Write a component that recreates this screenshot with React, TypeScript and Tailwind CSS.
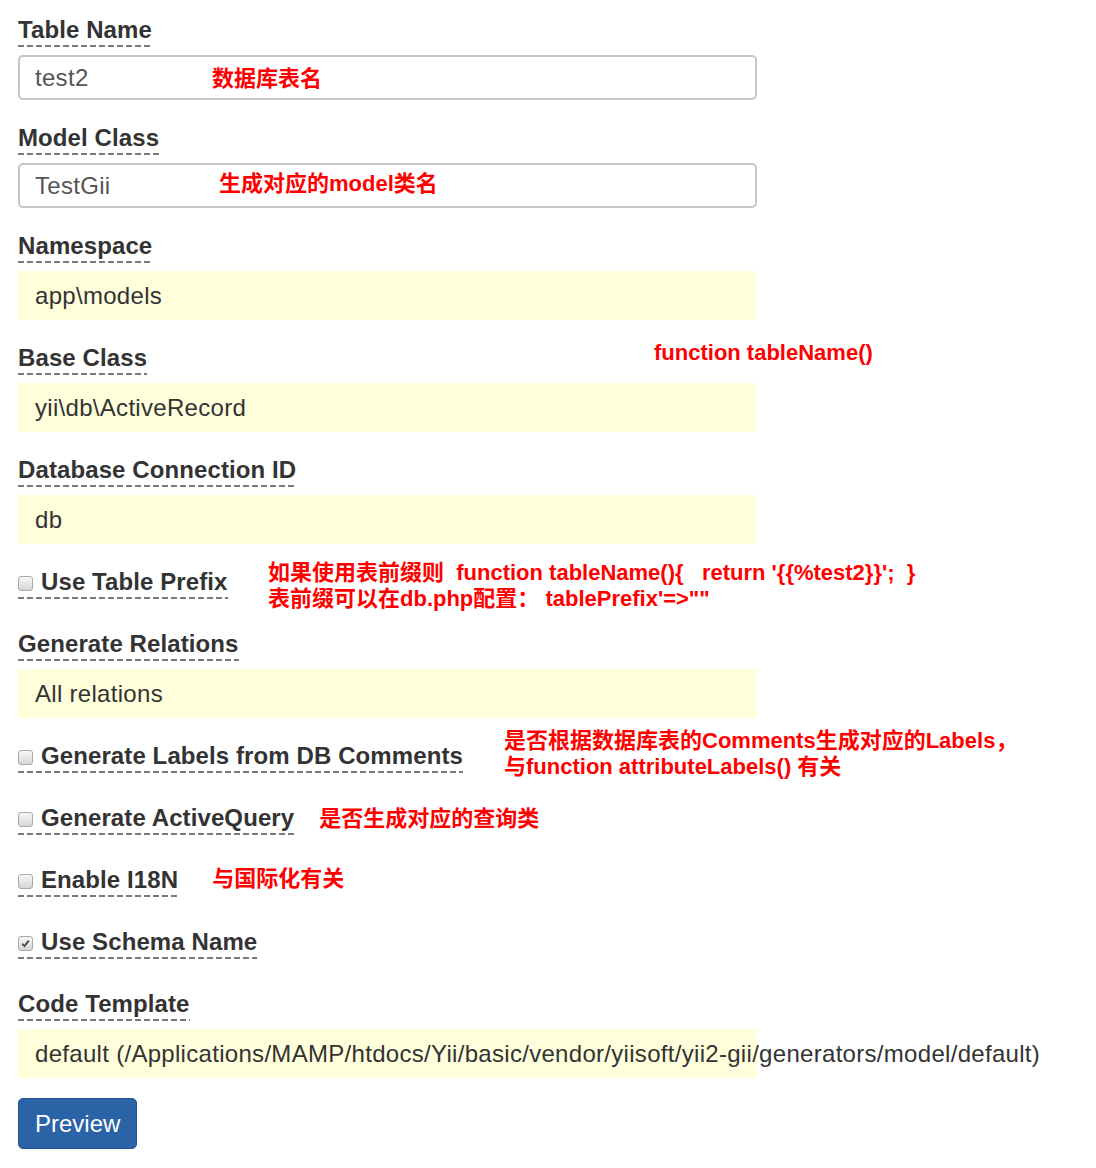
import React from "react";

const font = "font-['Liberation_Sans','Noto_Sans_CJK_SC',sans-serif]";
const dashed =
  "bg-[linear-gradient(to_right,#7a7a7a_6px,transparent_6px)] bg-[length:9px_2px] bg-bottom-left bg-repeat-x";
const red = "whitespace-pre text-[22px] leading-[26px] font-bold text-[#ff0000]";
const note = `absolute ${red}`;

function Label({ text }: { text: string }) {
  return (
    <div>
      <span className={`inline-block text-[24px] leading-[28px] font-bold tracking-[0.1px] text-[#333] pb-[3px] ${dashed}`}>
        {text}
      </span>
    </div>
  );
}

function Box({ checked }: { checked?: boolean }) {
  return (
    <span className="mt-[3px] flex h-[15px] w-[15px] items-center justify-center rounded-[3px] border border-[#a9a9a9] bg-[linear-gradient(to_bottom,#f7f7f7,#d6d6d6)]">
      {checked && (
        <svg width="11" height="11" viewBox="0 0 10 10">
          <path d="M2 5.2 L4 7.4 L8 2.4" fill="none" stroke="#444" strokeWidth="1.6" />
        </svg>
      )}
    </span>
  );
}

function CheckRow({ text, checked, children }: { text: string; checked?: boolean; children?: React.ReactNode }) {
  return (
    <div className="relative mb-[24px] flex items-start pb-[7px]">
      <span className={`inline-flex items-center gap-[8px] text-[24px] leading-[28px] font-bold tracking-[0.1px] text-[#333] pb-[3px] ${dashed}`}>
        <Box checked={checked} />
        {text}
      </span>
      {children}
    </div>
  );
}

function Field({
  label,
  value,
  yellow,
  children,
}: {
  label: string;
  value: string;
  yellow?: boolean;
  children?: React.ReactNode;
}) {
  return (
    <div className="relative mb-[24px]">
      <Label text={label} />
      {yellow ? (
        <div className="mt-[8px] flex h-[49px] w-[739px] items-center whitespace-nowrap bg-[#ffffdc] pl-[17px] text-[24px] tracking-[0.3px] text-[#333]">
          {value}
        </div>
      ) : (
        <div className="mt-[8px] flex h-[45px] w-[739px] items-center rounded-[5px] border-2 border-[#c6c6c6] pl-[15px] text-[24px] tracking-[0.3px] text-[#555]">
          {value}
        </div>
      )}
      {children}
    </div>
  );
}

export default function App() {
  return (
    <div className={`min-h-[1168px] w-[1096px] bg-white pl-[18px] pt-[16px] ${font}`}>
      <Field label="Table Name" value="test2">
        <div className={`${note} left-[194px] top-[50px]`}>数据库表名</div>
      </Field>
      <Field label="Model Class" value="TestGii">
        <div className={`${note} left-[201px] top-[47px]`}>生成对应的model类名</div>
      </Field>
      <Field label="Namespace" value="app\models" yellow />
      <Field label="Base Class" value="yii\db\ActiveRecord" yellow>
        <div className={`${note} left-[636px] top-[-4px]`}>function tableName()</div>
      </Field>
      <Field label="Database Connection ID" value="db" yellow />

      <CheckRow text="Use Table Prefix">
        <div className={`${note} left-[250px] top-[-8px]`}>
          {"如果使用表前缀则  function tableName(){   return '{{%test2}}';  }\n表前缀可以在db.php配置： tablePrefix'=>\"\""}
        </div>
      </CheckRow>

      <Field label="Generate Relations" value="All relations" yellow />

      <CheckRow text="Generate Labels from DB Comments">
        <div className={`${note} left-[486px] top-[-14px]`}>
          {"是否根据数据库表的Comments生成对应的Labels，\n与function attributeLabels() 有关"}
        </div>
      </CheckRow>
      <CheckRow text="Generate ActiveQuery">
        <div className={`${red} ml-[25px] mt-[2px]`}>是否生成对应的查询类</div>
      </CheckRow>
      <CheckRow text="Enable I18N">
        <div className={`${red} ml-[34px]`}>与国际化有关</div>
      </CheckRow>
      <CheckRow text="Use Schema Name" checked />

      <Field
        label="Code Template"
        value="default (/Applications/MAMP/htdocs/Yii/basic/vendor/yiisoft/yii2-gii/generators/model/default)"
        yellow
      />

      <button className="-mt-[4px] h-[51px] rounded-[5px] border border-[#22528f] bg-[#2b63a7] px-[16px] text-[24px] text-white">
        Preview
      </button>
    </div>
  );
}
